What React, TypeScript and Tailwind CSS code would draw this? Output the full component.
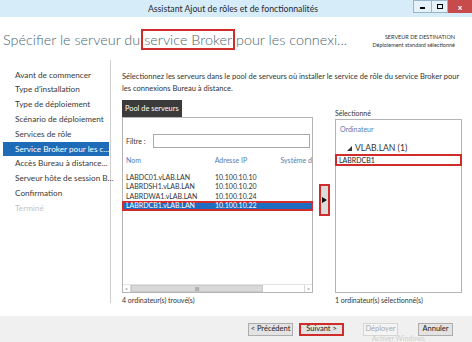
import React from 'react';

const navItems = [
  'Avant de commencer',
  "Type d'installation",
  'Type de déploiement',
  'Scénario de déploiement',
  'Services de rôle',
  'Service Broker pour les c...',
  'Accès Bureau à distance...',
  'Serveur hôte de session B...',
  'Confirmation',
  'Terminé',
];

const servers = [
  { name: 'LABDC01.vLAB.LAN', ip: '10.100.10.10' },
  { name: 'LABRDSH1.vLAB.LAN', ip: '10.100.10.20' },
  { name: 'LABRDWA1.vLAB.LAN', ip: '10.100.10.24' },
  { name: 'LABRDCB1.vLAB.LAN', ip: '10.100.10.22' },
];

export default function App() {
  return (
    <div className="relative w-[472px] h-[342px] bg-white flex flex-col overflow-hidden font-['Lato','Liberation_Sans',sans-serif] text-[#333]">
      {/* barre de titre */}
      <div className="relative h-[17px] bg-[#d7ecf9] shrink-0">
        <div className="text-center text-[8.7px] leading-[17px] text-[#1f2a33] pr-[6px]">
          Assistant Ajout de rôles et de fonctionnalités
        </div>
        <div className="absolute right-0 top-0 flex h-[13px]">
          <div className="w-[19px] h-full border border-[#9bb5c8] bg-[#e6f2fa] flex items-center justify-center">
            <div className="w-[5px] h-[2px] bg-black mt-[2px]" />
          </div>
          <div className="w-[16px] h-full border-y border-r border-[#9bb5c8] bg-[#e6f2fa] flex items-center justify-center">
            <div className="w-[6px] h-[5px] border-[1.5px] border-black" />
          </div>
          <div className="w-[24px] h-full bg-[#c74b4b] flex items-center justify-center text-white text-[8px] font-bold leading-none">
            x
          </div>
        </div>
      </div>

      {/* en-tête */}
      <div className="h-[43px] shrink-0 flex justify-between items-start">
        <div className="pl-[3px] pt-[13px] text-[14.4px] leading-[20px] font-light text-[#4a6772] whitespace-nowrap">
          Spécifier le serveur du
          <span className="border-2 border-[#d02c2c] px-[1px] mx-[1px]">service Broker</span>
          pour les connexi...
        </div>
        <div className="pr-[17px] pt-[16px] text-right text-[5.5px] leading-[8px] text-[#333]">
          <div>SERVEUR DE DESTINATION</div>
          <div>Déploiement standard sélectionné</div>
        </div>
      </div>

      {/* corps */}
      <div className="h-[256px] shrink-0 flex">
        <div className="w-[111px] h-[243px] border-r border-[#cfcfcf] pt-[7.6px] text-[8.2px]">
          {navItems.map((item, i) => (
            <div
              key={item}
              className={
                i === 5
                  ? 'ml-[3px] w-[106px] h-[14.8px] leading-[14.8px] pl-[12px] bg-[#1e6bb8] text-white whitespace-nowrap'
                  : i === 9
                  ? 'ml-[3px] w-[106px] h-[14.8px] leading-[14.8px] pl-[12px] text-[#c4c4c4] whitespace-nowrap'
                  : 'ml-[3px] w-[106px] h-[14.8px] leading-[14.8px] pl-[12px] text-[#3a3a3a] whitespace-nowrap'
              }
            >
              {item}
            </div>
          ))}
        </div>

        <div className="flex-1 pl-[11px] pt-[11px]">
          <div className="text-[7.55px] leading-[12px] text-[#333]">
            <div className="whitespace-nowrap">
              Sélectionnez les serveurs dans le pool de serveurs où installer le service de rôle du service Broker pour
            </div>
            <div>les connexions Bureau à distance.</div>
          </div>

          <div className="mt-[5px] flex items-start">
            {/* pool de serveurs */}
            <div className="w-[191px]">
              <div className="w-[60px] h-[17px] bg-[#3b3b3b] text-white text-[7.4px] leading-[17px] pl-[3px]">
                Pool de serveurs
              </div>
              <div className="h-[176px] border border-[#b4b4b4] flex flex-col text-[7px]">
                <div className="mt-[16px] flex items-center pl-[3px] pr-[2px]">
                  <span className="w-[27px] text-[#333]">Filtre :</span>
                  <div className="flex-1 h-[14px] border border-[#a8a8a8] bg-white" />
                </div>
                <div className="mt-[6px] h-[12px] flex items-center pl-[3px] text-[#5a7bb0] whitespace-nowrap overflow-hidden">
                  <span className="w-[89px]">Nom</span>
                  <span className="w-[66px]">Adresse IP</span>
                  <span>Système d</span>
                </div>
                <div className="mt-[6px]">
                  {servers.map((s, i) => (
                    <div
                      key={s.name}
                      className={
                        i === 3
                          ? '-mx-[1px] h-[10px] flex items-center pl-[2px] bg-[#1f6dc0] text-white border-2 border-[#d02c2c]'
                          : 'h-[9.5px] flex items-center pl-[3px] text-[#333]'
                      }
                    >
                      <span className="w-[89px]">{s.name}</span>
                      <span>{s.ip}</span>
                    </div>
                  ))}
                </div>
                <div className="flex-1" />
                <div className="h-[8px] flex items-stretch border-t border-[#e3e3e3] bg-white">
                  <div className="w-[8px] border-r border-[#d8d8d8] text-[6px] leading-[7px] text-center text-[#777]">&lt;</div>
                  <div className="w-[132px] bg-[#d9d9d9] border border-[#c9c9c9] text-[5px] leading-[6px] text-center text-[#666]">III</div>
                  <div className="flex-1" />
                  <div className="w-[8px] border-l border-[#d8d8d8] text-[6px] leading-[7px] text-center text-[#777]">&gt;</div>
                </div>
              </div>
              <div className="mt-[2px] text-[7px] leading-[10px] text-[#333]">4 ordinateur(s) trouvé(s)</div>
            </div>

            {/* bouton flèche */}
            <div className="w-[22px] pl-[6px] pt-[84px]">
              <div className="w-[11px] h-[32px] bg-[#dcdcdc] border-2 border-[#d02c2c] flex items-center justify-center">
                <svg width="5" height="6" viewBox="0 0 5 6">
                  <path d="M0 0 L5 3 L0 6 Z" fill="#111" />
                </svg>
              </div>
            </div>

            {/* sélectionné */}
            <div className="w-[127px] pt-[8px]">
              <div className="text-[7px] leading-[11px] text-[#333]">Sélectionné</div>
              <div className="h-[174px] border border-[#b4b4b4] text-[7px]">
                <div className="mt-[4px] pl-[4px] h-[10px] leading-[10px] text-[#5a7bb0]">Ordinateur</div>
                <div className="mt-[8px] h-[12px] flex items-center pl-[11px] gap-[3px] text-[#333]">
                  <svg width="5" height="5" viewBox="0 0 5 5">
                    <path d="M5 0 L5 5 L0 5 Z" fill="#333" />
                  </svg>
                  <span className="text-[8.6px]">VLAB.LAN (1)</span>
                </div>
                <div className="-mx-[1px] h-[12px] border-2 border-[#d02c2c] flex items-center pl-[2px] text-[#222]">
                  LABRDCB1
                </div>
              </div>
              <div className="mt-[2px] text-[7px] leading-[10px] text-[#333]">1 ordinateur(s) sélectionné(s)</div>
            </div>
          </div>
        </div>
      </div>

      {/* boutons */}
      <div className="flex-1 bg-[#f0f0f0] flex items-center justify-end pr-[19px] text-[7.5px]">
        <div className="w-[45px] h-[13px] bg-[#e3e3e3] border border-[#adadad] flex items-center justify-center text-[#222]">
          &lt; Précédent
        </div>
        <div className="ml-[6px] w-[45px] h-[13px] bg-[#e3e3e3] border-2 border-[#d02c2c] flex items-center justify-center text-[#222]">
          Suivant &gt;
        </div>
        <div className="ml-[19px] w-[35px] h-[13px] bg-[#f4f4f4] border border-[#d5d5d5] flex items-center justify-center text-[#a8a8a8]">
          Déployer
        </div>
        <div className="ml-[20px] w-[35px] h-[13px] bg-[#e3e3e3] border border-[#adadad] flex items-center justify-center text-[#222]">
          Annuler
        </div>
      </div>

      {/* filigrane d'activation */}
      <div className="absolute left-[372px] top-[334px] text-[7px] leading-[8px] text-[#cfcfcf] whitespace-nowrap">
        Activer Windows
      </div>
    </div>
  );
}
